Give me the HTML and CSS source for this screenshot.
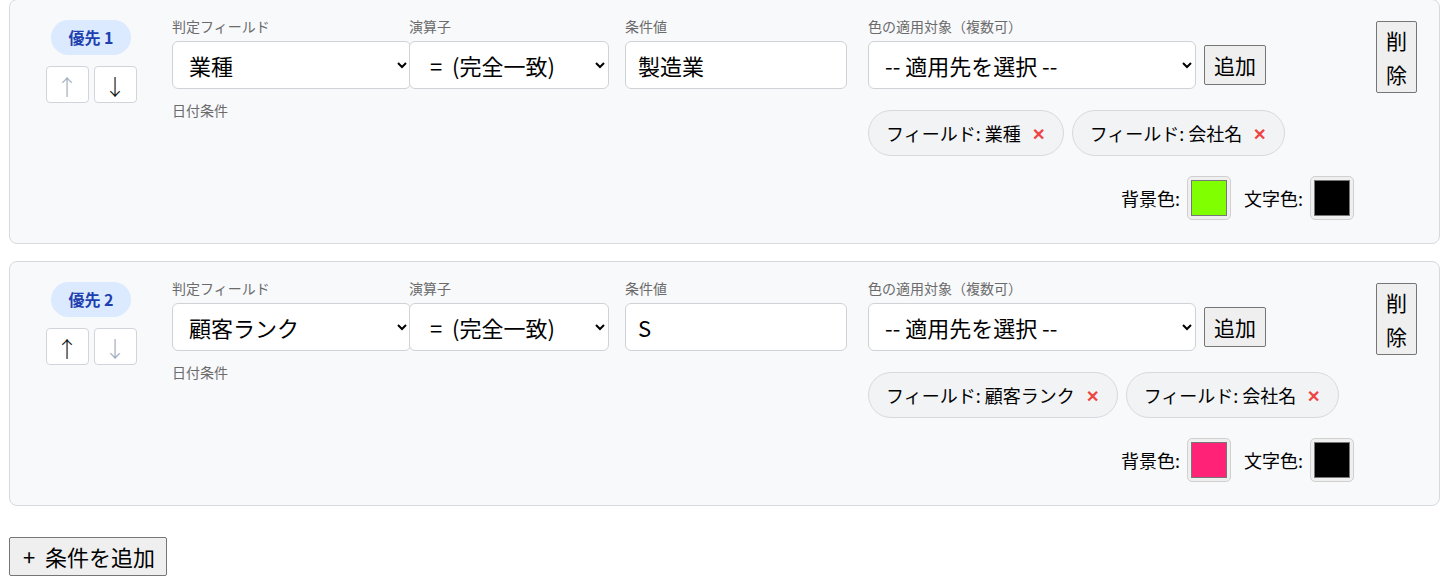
FILE: index.html
```html
<!DOCTYPE html>
<html lang="ja">
<head>
    <meta charset="UTF-8">
    <meta name="viewport" content="width=device-width, initial-scale=1.0">
    <title>条件付き書式</title>
    <link rel="stylesheet" href="styles.css">
</head>
<body>
    <div class="rule-list">
        <div class="rule-card">
            <div class="priority-col">
                <span class="priority-badge">優先 1</span>
                <div class="move-buttons">
                    <button class="move-btn" disabled>↑</button>
                    <button class="move-btn">↓</button>
                </div>
            </div>
            <div class="field-group field-col">
                <label>判定フィールド</label>
                <select class="field-select">
                    <option>業種</option>
                </select>
                <p class="date-note">日付条件</p>
            </div>
            <div class="field-group operator-col">
                <label>演算子</label>
                <select class="field-select">
                    <option>=&nbsp; (完全一致)</option>
                </select>
            </div>
            <div class="field-group value-col">
                <label>条件値</label>
                <input type="text" class="field-input" value="製造業">
            </div>
            <div class="field-group apply-col">
                <label>色の適用対象（複数可）</label>
                <div class="apply-row">
                    <select class="field-select apply-select">
                        <option>-- 適用先を選択 --</option>
                    </select>
                    <button class="plain-btn">追加</button>
                </div>
                <div class="chips">
                    <span class="chip">フィールド: 業種 <span class="chip-remove">✕</span></span>
                    <span class="chip">フィールド: 会社名 <span class="chip-remove">✕</span></span>
                </div>
                <div class="color-row">
                    <span class="color-label">背景色:</span>
                    <input type="color" class="color-input" value="#80ff00">
                    <span class="color-label">文字色:</span>
                    <input type="color" class="color-input" value="#000000">
                </div>
            </div>
            <button class="plain-btn delete-btn">削除</button>
        </div>

        <div class="rule-card">
            <div class="priority-col">
                <span class="priority-badge">優先 2</span>
                <div class="move-buttons">
                    <button class="move-btn">↑</button>
                    <button class="move-btn" disabled>↓</button>
                </div>
            </div>
            <div class="field-group field-col">
                <label>判定フィールド</label>
                <select class="field-select">
                    <option>顧客ランク</option>
                </select>
                <p class="date-note">日付条件</p>
            </div>
            <div class="field-group operator-col">
                <label>演算子</label>
                <select class="field-select">
                    <option>=&nbsp; (完全一致)</option>
                </select>
            </div>
            <div class="field-group value-col">
                <label>条件値</label>
                <input type="text" class="field-input" value="S">
            </div>
            <div class="field-group apply-col">
                <label>色の適用対象（複数可）</label>
                <div class="apply-row">
                    <select class="field-select apply-select">
                        <option>-- 適用先を選択 --</option>
                    </select>
                    <button class="plain-btn">追加</button>
                </div>
                <div class="chips">
                    <span class="chip">フィールド: 顧客ランク <span class="chip-remove">✕</span></span>
                    <span class="chip">フィールド: 会社名 <span class="chip-remove">✕</span></span>
                </div>
                <div class="color-row">
                    <span class="color-label">背景色:</span>
                    <input type="color" class="color-input" value="#ff2277">
                    <span class="color-label">文字色:</span>
                    <input type="color" class="color-input" value="#000000">
                </div>
            </div>
            <button class="plain-btn delete-btn">削除</button>
        </div>

        <button class="plain-btn add-rule-btn">+&nbsp; 条件を追加</button>
    </div>
</body>
</html>
```

FILE: styles.css
```css
body {
    margin: 0;
    font-family: "Noto Sans CJK JP", "Noto Sans", sans-serif;
    background-color: #fff;
    color: #000;
}

.rule-list {
    margin-top: -1px;
    padding: 0 9px;
}

.rule-card {
    display: flex;
    align-items: flex-start;
    background: #f8f9fb;
    border: 1px solid #d6d9de;
    border-radius: 8px;
    padding: 16px 22px 23px 31px;
    margin-bottom: 17px;
}

.priority-col {
    width: 100px;
    margin-right: 31px;
    margin-top: 4px;
    display: flex;
    flex-direction: column;
    align-items: center;
}

.priority-badge {
    display: inline-block;
    background: #dbeafe;
    color: #1e40af;
    font-weight: bold;
    font-size: 16px;
    line-height: 35px;
    height: 35px;
    padding: 0 17px;
    border-radius: 18px;
}

.move-buttons {
    display: flex;
    gap: 5px;
    margin-top: 11px;
}

.move-btn {
    width: 43px;
    height: 37px;
    padding: 0;
    background: #fff;
    border: 1px solid #d1d5db;
    border-radius: 4px;
    font-family: "Noto Sans CJK JP", sans-serif;
    font-size: 22px;
    font-weight: 300;
    color: #111;
}

.move-btn:disabled {
    color: #a3aec0;
}

.field-group {
    display: flex;
    flex-direction: column;
}

.field-group label {
    font-size: 14px;
    line-height: 20px;
    color: #6b6b6b;
    margin-bottom: 5px;
}

.field-select,
.field-input {
    box-sizing: border-box;
    height: 48px;
    border: 1px solid #cfd2d6;
    border-radius: 6px;
    background: #fff;
    font-family: "Noto Sans CJK JP", sans-serif;
    font-size: 22px;
    color: #000;
    padding: 0 8px 0 12px;
}

.field-input {
    padding: 0 12px;
}

.field-col {
    width: 237px;
}

.field-col .field-select {
    width: 239px;
}

.operator-col {
    width: 200px;
    margin-right: 16px;
}

.operator-col .field-select {
    padding-left: 16px;
}

.value-col {
    width: 222px;
    margin-right: 21px;
}

.apply-col {
    flex: 1;
    margin-right: 16px;
}

.date-note {
    margin: 11px 0 0;
    font-size: 14px;
    line-height: 20px;
    color: #6b6b6b;
}

.apply-row {
    display: flex;
    align-items: center;
    gap: 8px;
}

.apply-select {
    width: 328px;
}

.plain-btn {
    font-family: "Noto Sans CJK JP", sans-serif;
    font-size: 21px;
    line-height: 32px;
    color: #000;
    background: #efefef;
    border: 1px solid #767676;
    border-radius: 2px;
    padding: 3px 9px;
}

.delete-btn {
    width: 41px;
    padding: 1px 0;
    line-height: 34px;
    margin-top: 5px;
}

.chips {
    display: flex;
    gap: 8px;
    margin-top: 21px;
}

.chip {
    box-sizing: border-box;
    height: 46px;
    display: inline-flex;
    align-items: center;
    background: #f2f3f5;
    border: 1px solid #d6d9de;
    border-radius: 24px;
    padding: 0 18px 0 17px;
    font-size: 18px;
}

.chip-remove {
    color: #ef4444;
    font-size: 16px;
    font-weight: bold;
    margin-left: 11px;
}

.color-row {
    display: flex;
    justify-content: flex-end;
    align-items: center;
    margin-top: 20px;
}

.color-row .color-label {
    font-size: 18px;
    color: #000;
    margin-right: 7px;
}

.color-input {
    box-sizing: border-box;
    width: 44px;
    height: 44px;
    padding: 0;
    border: 1px solid #d0d0d0;
    border-radius: 5px;
    background: #efefef;
    margin: 0 13px 0 0;
}

.color-input:last-child {
    margin-right: 6px;
}

.color-input::-webkit-color-swatch-wrapper {
    padding: 3px;
}

.color-input::-webkit-color-swatch {
    border: 1px solid #777;
    border-radius: 0;
}

.add-rule-btn {
    margin-top: 14px;
    font-size: 22px;
    line-height: 35px;
    padding: 1px 11px 1px 13px;
}
```
